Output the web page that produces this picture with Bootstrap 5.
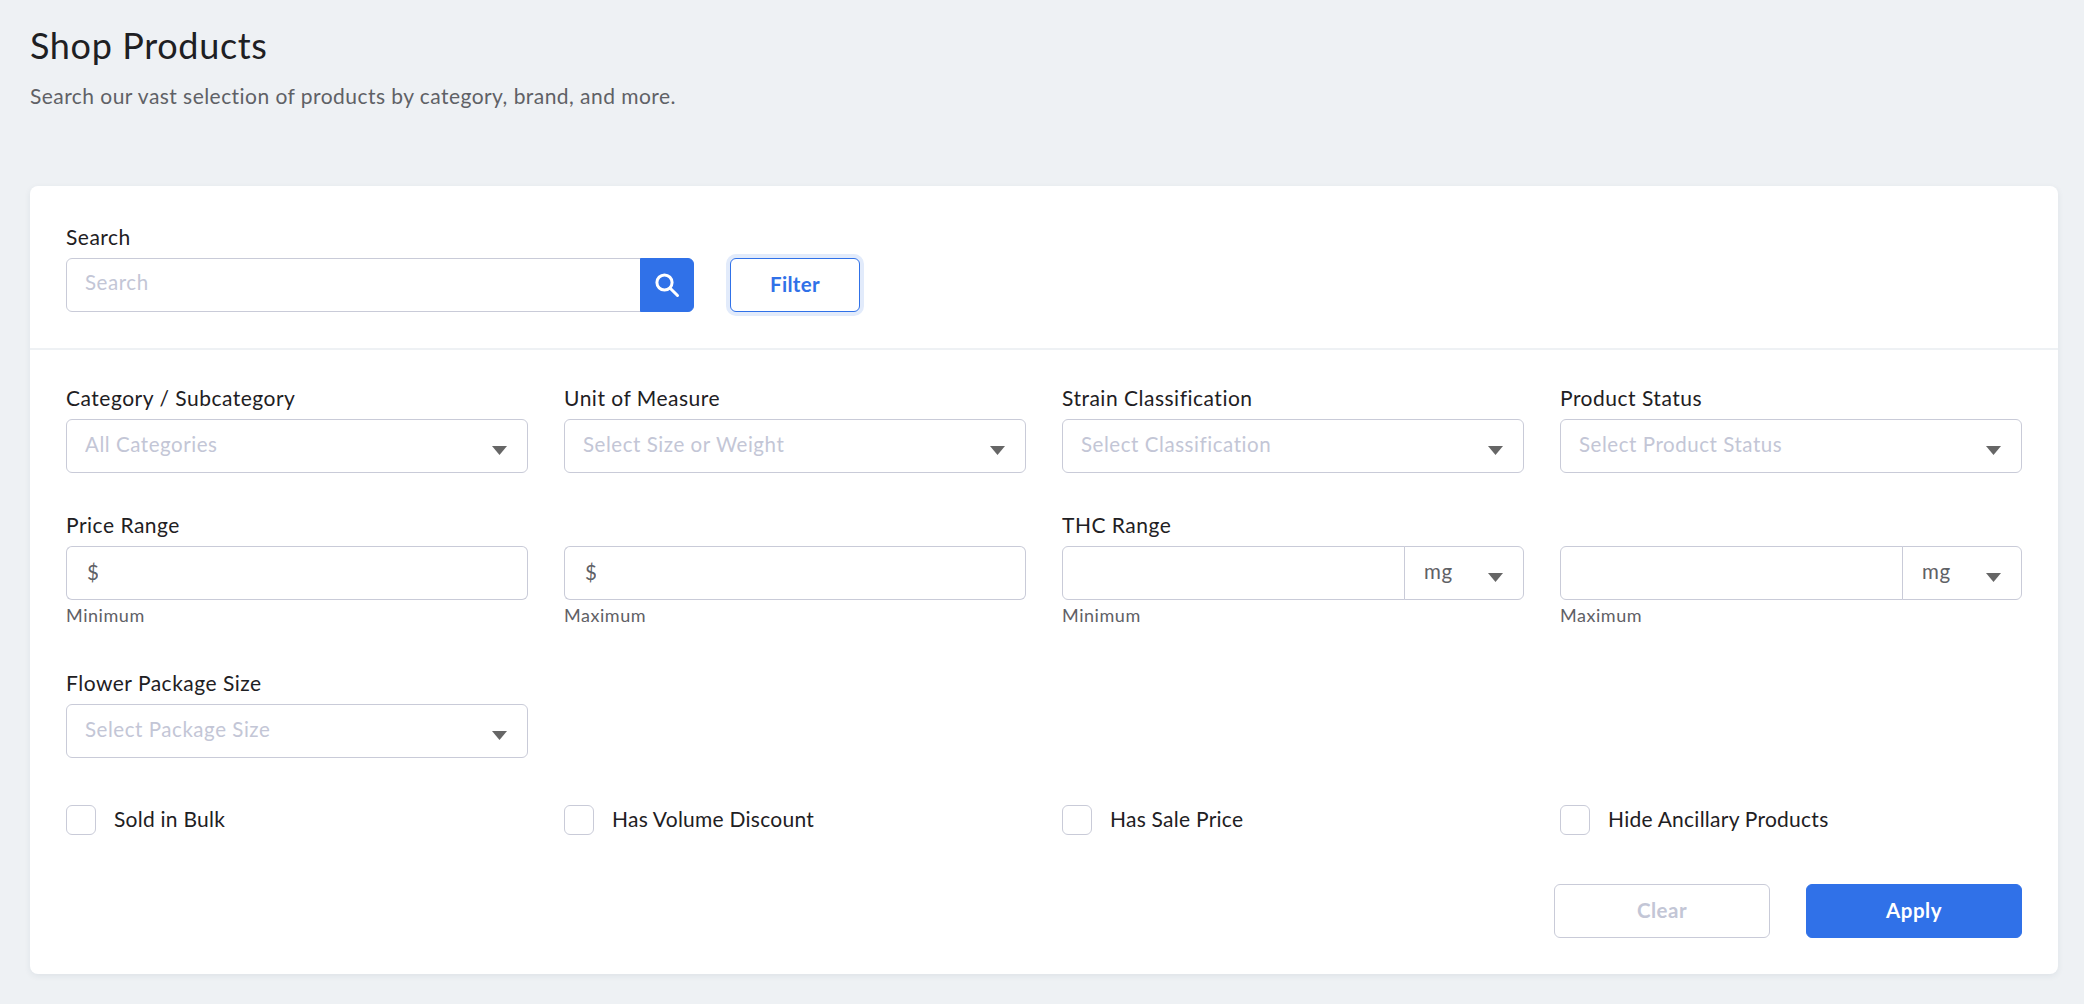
<!DOCTYPE html>
<html lang="en">
<head>
<meta charset="utf-8">
<title>Shop Products</title>
<link href="https://cdn.jsdelivr.net/npm/bootstrap@5.3.0/dist/css/bootstrap.min.css" rel="stylesheet">
<style>
:root{--ink:#1e2023;--muted:#5f6166;--line:#c9cbd8;--ph:#c3c6d6;--blue:#3071e8;--page:#eef1f4;}
html,body{height:100%;}
body{background:var(--page);font-family:"Lato","Liberation Sans",sans-serif;color:var(--ink);font-size:20px;}
.page-wrap{padding:26px 26px 0 30px;}
.page-title{font-size:36px;font-weight:400;line-height:38px;margin:0 0 19px;letter-spacing:.65px;}
.page-sub{font-size:21px;line-height:26px;color:var(--muted);margin:0 0 77px;letter-spacing:.45px;}
.panel{border:0;border-radius:8px;box-shadow:0 2px 6px rgba(40,60,90,.08);}
.panel-top{padding:40px 36px 36px;border-bottom:2px solid #eef1f4;}
.panel-body{padding:37px 36px 36px;}
.field-label{display:block;font-size:21px;line-height:22px;margin-bottom:10px;letter-spacing:.5px;color:var(--ink);}
.form-control,.form-select,.unit-sign{height:54px;font-size:20.5px;border-color:var(--line);color:var(--muted);letter-spacing:.55px;}
.form-control{padding:0 18px 6px;border-radius:6px;}
.form-control::placeholder{color:var(--ph);}
.form-select{padding:0 40px 3px 18px;border-radius:6px;background-image:url("data:image/svg+xml,%3Csvg xmlns='http://www.w3.org/2000/svg' viewBox='0 0 15 9'%3E%3Cpath fill='%23666' d='M0 0h15L7.5 9z'/%3E%3C/svg%3E");background-size:15px 9px;background-position:right 20px top 26px;}
.form-select.is-empty{color:var(--ph);}
.search-box{width:628px;}
.search-btn{width:54px;height:54px;padding:0;background:var(--blue);border-color:var(--blue);border-radius:0 6px 6px 0;display:flex;align-items:center;justify-content:center;}
.filter-btn{width:130px;height:54px;margin-left:36px;padding-bottom:8px;font-size:20.5px;font-weight:700;color:var(--blue);background:#fff;border:1.5px solid var(--blue);border-radius:6px;box-shadow:0 0 0 4px #e2ebfb;letter-spacing:.3px;}
.grid-row{--bs-gutter-x:36px;--bs-gutter-y:0;}
.gap-a{margin-bottom:41px;}
.gap-b{margin-bottom:47px;}
.gap-c{margin-bottom:47px;}
.gap-d{margin-bottom:49px;}
.unit-sign{background:#fff;padding:0 0 2px 20px;border-right:0;border-radius:6px 0 0 6px;}
.input-group > .sign-input{border-left:0;padding-left:6px;}
.input-group > .unit-select{flex:0 0 120px;width:120px;padding-left:19px;color:var(--muted);}
.help-text{font-size:18px;line-height:20px;color:var(--muted);margin-top:5px;letter-spacing:.55px;}
.tick-wrap{display:flex;align-items:center;min-height:30px;padding:0;margin:0;}
.tick-wrap .form-check-input{width:30px;height:30px;margin:0 18px 0 0;float:none;border:1px solid var(--line);border-radius:6px;flex:none;}
.tick-wrap .form-check-label{font-size:21px;line-height:24px;letter-spacing:.25px;color:var(--ink);margin-top:-3px;}
.act-btn{width:216px;height:54px;font-size:20.5px;border-radius:6px;letter-spacing:.5px;padding-bottom:8px;}
.act-clear{background:#fff;border:1px solid var(--line);color:var(--ph);font-weight:700;}
.act-apply{background:var(--blue);border:1px solid var(--blue);color:#fff;font-weight:700;margin-left:36px;}
</style>
</head>
<body>
<div class="page-wrap">
  <h1 class="page-title">Shop Products</h1>
  <p class="page-sub">Search our vast selection of products by category, brand, and more.</p>

  <div class="card panel">
    <div class="panel-top">
      <label class="field-label" for="q">Search</label>
      <div class="d-flex align-items-center">
        <div class="input-group search-box">
          <input id="q" type="text" class="form-control" placeholder="Search">
          <button class="btn btn-primary search-btn" type="button" aria-label="Search">
            <svg width="26" height="26" viewBox="0 0 26 26" fill="none" stroke="#fff" stroke-width="3" stroke-linecap="round"><circle cx="10.5" cy="10.5" r="7.6"/><path d="M16.2 16.2l7.3 7.3"/></svg>
          </button>
        </div>
        <button class="btn filter-btn" type="button">Filter</button>
      </div>
    </div>

    <div class="panel-body">
      <div class="row grid-row gap-a">
        <div class="col-3">
          <label class="field-label">Category / Subcategory</label>
          <select class="form-select is-empty"><option>All Categories</option></select>
        </div>
        <div class="col-3">
          <label class="field-label">Unit of Measure</label>
          <select class="form-select is-empty"><option>Select Size or Weight</option></select>
        </div>
        <div class="col-3">
          <label class="field-label">Strain Classification</label>
          <select class="form-select is-empty"><option>Select Classification</option></select>
        </div>
        <div class="col-3">
          <label class="field-label">Product Status</label>
          <select class="form-select is-empty"><option>Select Product Status</option></select>
        </div>
      </div>

      <div class="row grid-row gap-b">
        <div class="col-3">
          <label class="field-label">Price Range</label>
          <div class="input-group">
            <span class="input-group-text unit-sign">$</span>
            <input type="text" class="form-control sign-input">
          </div>
          <div class="help-text">Minimum</div>
        </div>
        <div class="col-3">
          <label class="field-label">&nbsp;</label>
          <div class="input-group">
            <span class="input-group-text unit-sign">$</span>
            <input type="text" class="form-control sign-input">
          </div>
          <div class="help-text">Maximum</div>
        </div>
        <div class="col-3">
          <label class="field-label">THC Range</label>
          <div class="input-group">
            <input type="text" class="form-control">
            <select class="form-select unit-select"><option>mg</option></select>
          </div>
          <div class="help-text">Minimum</div>
        </div>
        <div class="col-3">
          <label class="field-label">&nbsp;</label>
          <div class="input-group">
            <input type="text" class="form-control">
            <select class="form-select unit-select"><option>mg</option></select>
          </div>
          <div class="help-text">Maximum</div>
        </div>
      </div>

      <div class="row grid-row gap-c">
        <div class="col-3">
          <label class="field-label">Flower Package Size</label>
          <select class="form-select is-empty"><option>Select Package Size</option></select>
        </div>
      </div>

      <div class="row grid-row gap-d">
        <div class="col-3"><div class="form-check tick-wrap"><input class="form-check-input" type="checkbox" id="c1"><label class="form-check-label" for="c1">Sold in Bulk</label></div></div>
        <div class="col-3"><div class="form-check tick-wrap"><input class="form-check-input" type="checkbox" id="c2"><label class="form-check-label" for="c2">Has Volume Discount</label></div></div>
        <div class="col-3"><div class="form-check tick-wrap"><input class="form-check-input" type="checkbox" id="c3"><label class="form-check-label" for="c3">Has Sale Price</label></div></div>
        <div class="col-3"><div class="form-check tick-wrap"><input class="form-check-input" type="checkbox" id="c4"><label class="form-check-label" for="c4">Hide Ancillary Products</label></div></div>
      </div>

      <div class="d-flex justify-content-end">
        <button class="btn act-btn act-clear" type="button">Clear</button>
        <button class="btn act-btn act-apply" type="button">Apply</button>
      </div>
    </div>
  </div>
</div>
<script src="https://cdn.jsdelivr.net/npm/bootstrap@5.3.0/dist/js/bootstrap.bundle.min.js"></script>
</body>
</html>
